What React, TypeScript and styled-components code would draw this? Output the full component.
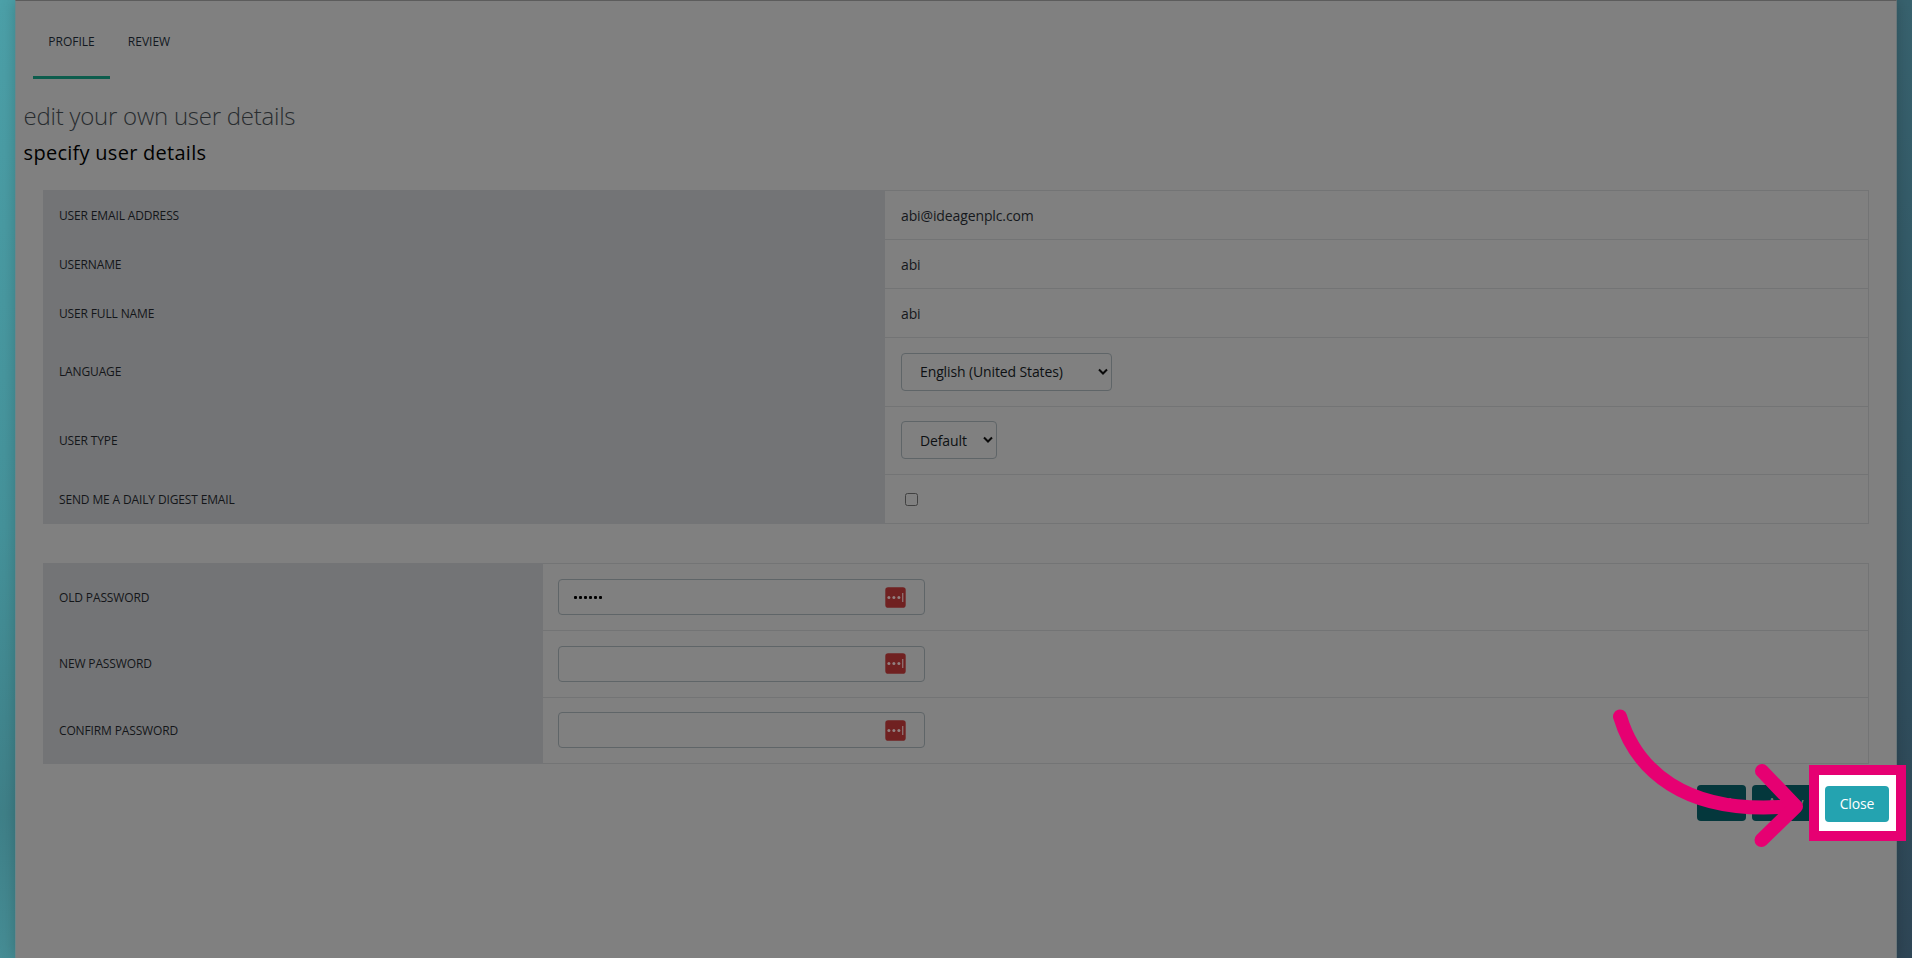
import React from 'react';
import styled, { createGlobalStyle } from 'styled-components';

const GlobalStyle = createGlobalStyle`
  * { box-sizing: border-box; }
  html, body { margin: 0; height: 100%; overflow: hidden; }
  body { font-family: 'Open Sans', sans-serif; font-size: 14px; letter-spacing: -0.12px; color: #15181c; }
`;

const Page = styled.div`
  position: relative;
  width: 1912px;
  height: 958px;
  padding: 0 15px;
  overflow: hidden;
  background:
    linear-gradient(180deg, #4ca0a8 0%, #45929a 55%, #3f8088 85%, #468d95 100%) left / 16px 100% no-repeat,
    linear-gradient(180deg, #38626e 0%, #315563 45%, #2f4656 100%) right / 16px 100% no-repeat;
`;

const Panel = styled.main`
  height: 958px;
  background: #808080;
  border-top: 1px solid #5c5c5c;
  border-left: 1px solid #6d8588;
  border-right: 1px solid #6b7679;
  box-shadow: 0 0 14px rgba(0, 0, 0, 0.2);
`;

const Tabs = styled.nav`
  display: flex;
  gap: 2.5px;
  height: 79px;
  padding-left: 17px;
`;

const Tab = styled.a<{ $active?: boolean }>`
  height: 78px;
  padding: 30px 15.3px 0;
  font-size: 12px;
  line-height: 22px;
  letter-spacing: 0;
  color: #12181f;
  border-bottom: 3px solid ${(p) => (p.$active ? '#0d5d4d' : 'transparent')};
`;

const Title = styled.h1`
  margin: 19px 0 0 7.6px;
  font-size: 24px;
  line-height: 34px;
  font-weight: 300;
  letter-spacing: -0.25px;
  color: #282c2f;
`;

const Subtitle = styled.h2`
  margin: 4px 0 0 7.6px;
  font-size: 20px;
  line-height: 32px;
  font-weight: 400;
  letter-spacing: 0.27px;
  color: #000;
`;

const FormTable = styled.section<{ $gap: number }>`
  margin: ${(p) => p.$gap}px 27px 0;
  border-right: 1px solid #737475;
`;

const Row = styled.div<{ $height: number; $label: number }>`
  display: grid;
  grid-template-columns: ${(p) => p.$label}px 1fr;
  height: ${(p) => p.$height}px;
`;

const Label = styled.div`
  display: flex;
  align-items: center;
  padding: 1px 0 0 16px;
  background: #737476;
  font-size: 12px;
  letter-spacing: -0.14px;
  color: #141619;
`;

const Value = styled.div`
  display: flex;
  align-items: center;
  padding-left: 16px;
  border-top: 1px solid #737475;

  ${Row}:last-child & { border-bottom: 1px solid #737475; }
`;

const Select = styled.div<{ $width: number }>`
  display: flex;
  align-items: center;
  justify-content: space-between;
  width: ${(p) => p.$width}px;
  height: 38px;
  padding: 0 3px 0 18px;
  border: 1px solid #5f6568;
  border-radius: 4px;
  color: #0d1013;
`;

const Check = styled.span`
  width: 13px;
  height: 13px;
  margin-left: 4px;
  border: 1px solid #414141;
  border-radius: 2.5px;
`;

const Field = styled.div`
  display: flex;
  align-items: center;
  justify-content: space-between;
  width: 367px;
  height: 36px;
  margin-left: -1px;
  padding: 0 18px 0 14.5px;
  border: 1px solid #5f6568;
  border-radius: 4px;
`;

const Dots = styled.span`
  display: flex;
  gap: 2px;
  padding-top: 1px;
  i { width: 3px; height: 3px; border-radius: 1px; background: #000; }
`;

const Actions = styled.div`
  display: flex;
  gap: 6px;
  justify-content: flex-end;
  padding: 21px 7px 0 0;
`;

const Button = styled.div<{ $width: number; $bright?: boolean }>`
  width: ${(p) => p.$width}px;
  height: 36px;
  border-radius: 4px;
  text-align: center;
  line-height: 36px;
  color: ${(p) => (p.$bright ? '#fff' : '#808080')};
  background: ${(p) => (p.$bright ? '#24a3b0' : '#04373c')};
`;

const Spotlight = styled.div`
  position: absolute;
  left: 1809px;
  top: 764.5px;
  width: 97px;
  height: 76.5px;
  padding: 11px 6px;
  border: 10px solid #e60072;
  background: #fff;
`;

const Arrow = styled.svg`
  position: absolute;
  left: 1600px;
  top: 700px;
`;

const Chevron = () => (
  <svg width="10" height="8" viewBox="0 0 10 8" fill="none">
    <path d="M1 1.5 5 5.5 9 1.5" stroke="#0a0a0a" strokeWidth="2" />
  </svg>
);

const VaultIcon = () => (
  <svg width="21" height="21" viewBox="0 0 21 21">
    <rect x=".3" y=".3" width="20.4" height="20.4" rx="2.8" fill="#702121" />
    <g fill="#928080">
      <circle cx="3.9" cy="10.5" r="1.5" />
      <circle cx="8.9" cy="10.5" r="1.5" />
      <circle cx="13.9" cy="10.5" r="1.5" />
      <rect x="17.2" y="6" width="1.1" height="9" />
    </g>
  </svg>
);

const details: [string, number, React.ReactNode][] = [
  ['USER EMAIL ADDRESS', 49, 'abi@ideagenplc.com'],
  ['USERNAME', 49, 'abi'],
  ['USER FULL NAME', 49, 'abi'],
  ['LANGUAGE', 68.5, <Select $width={211}>English (United States)<Chevron /></Select>],
  ['USER TYPE', 68.5, <Select $width={96}>Default<Chevron /></Select>],
  ['SEND ME A DAILY DIGEST EMAIL', 50, <Check />],
];

const passwords: [string, number, number][] = [
  ['OLD PASSWORD', 67, 6],
  ['NEW PASSWORD', 66.5, 0],
  ['CONFIRM PASSWORD', 67.5, 0],
];

export default function App() {
  return (
    <>
      <GlobalStyle />
      <Page>
        <Panel>
          <Tabs>
            <Tab $active>PROFILE</Tab>
            <Tab>REVIEW</Tab>
          </Tabs>
          <Title>edit your own user details</Title>
          <Subtitle>specify user details</Subtitle>
          <FormTable $gap={21}>
            {details.map(([label, height, value]) => (
              <Row key={label} $height={height} $label={842}>
                <Label>{label}</Label>
                <Value>{value}</Value>
              </Row>
            ))}
          </FormTable>
          <FormTable $gap={39}>
            {passwords.map(([label, height, count]) => (
              <Row key={label} $height={height} $label={500}>
                <Label>{label}</Label>
                <Value>
                  <Field>
                    <Dots>{Array.from({ length: count }, (_, i) => <i key={i} />)}</Dots>
                    <VaultIcon />
                  </Field>
                </Value>
              </Row>
            ))}
          </FormTable>
          <Actions>
            <Button $width={49}>OK</Button>
            <Button $width={67}>Apply</Button>
            <Button $width={64}>Close</Button>
          </Actions>
        </Panel>
        <Spotlight>
          <Button $width={64} $bright>Close</Button>
        </Spotlight>
        <Arrow width="220" height="160" viewBox="0 0 220 160" fill="none" stroke="#e60072" strokeWidth="14" strokeLinecap="round" strokeLinejoin="round">
          <path d="M20 16.5C35 67 82 117 194 106" />
          <path d="M162 71 196 106.5 161.5 140" />
        </Arrow>
      </Page>
    </>
  );
}
